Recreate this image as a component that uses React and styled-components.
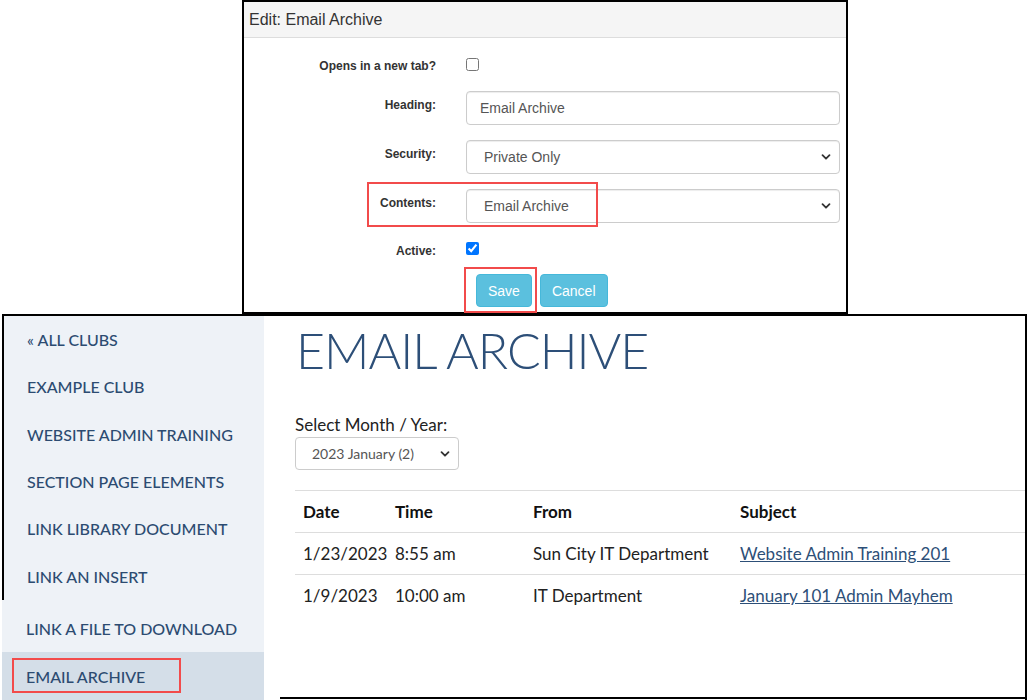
import React from "react";
import styled, { createGlobalStyle } from "styled-components";

const GlobalStyle = createGlobalStyle`
  html, body {
    margin: 0;
    padding: 0;
    background: #fff;
  }
  * {
    box-sizing: border-box;
  }
`;

const sideLinksTop = [
    "« ALL CLUBS",
    "EXAMPLE CLUB",
    "WEBSITE ADMIN TRAINING",
    "SECTION PAGE ELEMENTS",
    "LINK LIBRARY DOCUMENT",
    "LINK AN INSERT",
];

const emails = [
    { date: "1/23/2023", time: "8:55 am", from: "Sun City IT Department", subject: "Website Admin Training 201" },
    { date: "1/9/2023", time: "10:00 am", from: "IT Department", subject: "January 101 Admin Mayhem" },
];

const Chevron = ({ size = 10 }) => (
    <svg width={size} height={size} viewBox="0 0 10 10">
        <path d="M1.5 3.2 L5 6.7 L8.5 3.2" fill="none" stroke="#333" strokeWidth="1.8" strokeLinecap="round" strokeLinejoin="round" />
    </svg>
);

const App = () => {
    return (
        <>
            <GlobalStyle />
            <Page>
                <TopRow>
                    <EditPanel>
                        <PanelHeading>Edit: Email Archive</PanelHeading>
                        <PanelBody>
                            <FormRow $height={25}>
                                <Label $pad={7}>Opens in a new tab?</Label>
                                <Check type="checkbox" $top={7} readOnly />
                            </FormRow>
                            <FormRow>
                                <Label>Heading:</Label>
                                <TextInput type="text" defaultValue="Email Archive" />
                            </FormRow>
                            <FormRow>
                                <Label>Security:</Label>
                                <SelectBox>
                                    <span>Private Only</span>
                                    <Chevron />
                                </SelectBox>
                            </FormRow>
                            <FormRow>
                                <Label>Contents:</Label>
                                <SelectBox>
                                    <span>Email Archive</span>
                                    <Chevron />
                                </SelectBox>
                                <Callout $left={123} $top={-7} $width={231} $height={45} />
                            </FormRow>
                            <FormRow $height={21}>
                                <Label $pad={5}>Active:</Label>
                                <Check type="checkbox" $top={4} checked readOnly />
                            </FormRow>
                            <ButtonRow>
                                <SaveWrap>
                                    <InfoButton>Save</InfoButton>
                                    <Callout $left={-12} $top={-7} $width={73} $height={46} />
                                </SaveWrap>
                                <InfoButton>Cancel</InfoButton>
                            </ButtonRow>
                        </PanelBody>
                    </EditPanel>
                </TopRow>

                <SiteFrame>
                    <Sidebar>
                        <SidebarUpper>
                            {sideLinksTop.map((l) => (
                                <SideLink key={l}>{l}</SideLink>
                            ))}
                        </SidebarUpper>
                        <SidebarLower>
                            <SideLink $pad={24}>LINK A FILE TO DOWNLOAD</SideLink>
                            <SideLink $pad={24} $active>
                                EMAIL ARCHIVE
                                <Callout $left={10} $top={6} $width={169} $height={35} />
                            </SideLink>
                        </SidebarLower>
                    </Sidebar>

                    <Main>
                        <PageTitle>EMAIL ARCHIVE</PageTitle>
                        <MonthLabel>Select Month / Year:</MonthLabel>
                        <MonthSelect>
                            <span>2023 January (2)</span>
                            <Chevron />
                        </MonthSelect>
                        <ArchiveTable>
                            <colgroup>
                                <col style={{ width: 92 }} />
                                <col style={{ width: 138 }} />
                                <col style={{ width: 207 }} />
                                <col />
                            </colgroup>
                            <thead>
                                <tr>
                                    <Th>Date</Th>
                                    <Th>Time</Th>
                                    <Th>From</Th>
                                    <Th>Subject</Th>
                                </tr>
                            </thead>
                            <tbody>
                                {emails.map((e) => (
                                    <tr key={e.date}>
                                        <Td>{e.date}</Td>
                                        <Td>{e.time}</Td>
                                        <Td>{e.from}</Td>
                                        <Td>
                                            <SubjectLink href="#">{e.subject}</SubjectLink>
                                        </Td>
                                    </tr>
                                ))}
                            </tbody>
                        </ArchiveTable>
                    </Main>
                </SiteFrame>
            </Page>
        </>
    );
};

export default App;

const Page = styled.div`
    width: 1028px;
    height: 700px;
    overflow: hidden;
    background: #fff;
`;

const TopRow = styled.div`
    display: flex;
    padding-left: 242px;
    position: relative;
    z-index: 2;
`;

const EditPanel = styled.div`
    width: 606px;
    height: 314px;
    border: 2px solid #000;
    background: #fff;
    font-family: "Liberation Sans", Arial, sans-serif;
    color: #333;
`;

const PanelHeading = styled.div`
    height: 36px;
    padding: 0 5px;
    display: flex;
    align-items: center;
    background: #f5f5f5;
    border-bottom: 1px solid #ddd;
    font-size: 16px;
    color: #333;
`;

const PanelBody = styled.div`
    padding-top: 13px;
    display: flex;
    flex-direction: column;
    gap: 15px;
`;

const FormRow = styled.div`
    position: relative;
    display: flex;
    align-items: flex-start;
    height: ${(p) => p.$height || 34}px;
`;

const Label = styled.label`
    width: 192px;
    flex: 0 0 192px;
    padding-top: ${(p) => (p.$pad != null ? p.$pad : 6)}px;
    text-align: right;
    font-size: 12px;
    font-weight: bold;
    color: #333;
    line-height: 17px;
    margin-right: 30px;
`;

const Check = styled.input`
    margin: ${(p) => p.$top}px 0 0 0;
    width: 13px;
    height: 13px;
    accent-color: #0075ff;
`;

const TextInput = styled.input`
    width: 374px;
    height: 34px;
    padding: 6px 13px;
    border: 1px solid #ccc;
    border-radius: 4px;
    font-family: "Liberation Sans", Arial, sans-serif;
    font-size: 14px;
    color: #555;
    box-shadow: inset 0 1px 1px rgba(0, 0, 0, 0.075);
    outline: none;
`;

const SelectBox = styled.div`
    width: 374px;
    height: 34px;
    padding: 0 8px 0 17px;
    display: flex;
    align-items: center;
    justify-content: space-between;
    border: 1px solid #ccc;
    border-radius: 4px;
    font-size: 14px;
    color: #555;
    box-shadow: inset 0 1px 1px rgba(0, 0, 0, 0.075);
`;

const Callout = styled.div`
    position: absolute;
    left: ${(p) => p.$left}px;
    top: ${(p) => p.$top}px;
    width: ${(p) => p.$width}px;
    height: ${(p) => p.$height}px;
    border: 2px solid #f24b4b;
    pointer-events: none;
`;

const ButtonRow = styled.div`
    display: flex;
    gap: 8px;
    padding-left: 232px;
`;

const SaveWrap = styled.div`
    position: relative;
`;

const InfoButton = styled.button`
    height: 33px;
    padding: 0 11px;
    background: #5bc0de;
    border: 1px solid #46b8da;
    border-radius: 4px;
    color: #fff;
    font-family: "Liberation Sans", Arial, sans-serif;
    font-size: 14px;
`;

const SiteFrame = styled.div`
    display: flex;
    width: 1025px;
    height: 386px;
    margin-left: 2px;
    border-top: 2px solid #000;
    border-right: 2px solid #000;
    font-family: Lato, "Open Sans", sans-serif;
`;

const Sidebar = styled.div`
    width: 262px;
    flex: 0 0 262px;
    display: flex;
    flex-direction: column;
`;

const SidebarUpper = styled.div`
    height: 284px;
    border-left: 2px solid #000;
    background: #eef2f7;
    display: flex;
    flex-direction: column;
`;

const SidebarLower = styled.div`
    flex: 1;
    padding-top: 5px;
    background: #eef2f7;
    display: flex;
    flex-direction: column;
`;

const SideLink = styled.div`
    position: relative;
    height: 47.3px;
    flex: 0 0 auto;
    display: flex;
    align-items: center;
    padding-left: ${(p) => p.$pad || 23}px;
    font-size: 16px;
    font-weight: 500;
    color: #2c4b71;
    background: ${(p) => (p.$active ? "#d4dee8" : "transparent")};
    ${(p) => p.$active && "flex: 1;"}
`;

const Main = styled.div`
    flex: 1;
    margin-left: 16px;
    padding-left: 15px;
    border-bottom: 2px solid #000;
    height: 383px;
    display: flex;
    flex-direction: column;
    align-items: flex-start;
`;

const PageTitle = styled.h1`
    margin: 4px 0 0 1px;
    font-family: Lato, sans-serif;
    font-weight: 300;
    font-size: 50px;
    line-height: 60px;
    letter-spacing: -1px;
    color: #2d4f78;
`;

const MonthLabel = styled.div`
    margin-top: 34px;
    font-size: 17px;
    color: #222;
    line-height: 22px;
`;

const MonthSelect = styled.div`
    width: 164px;
    height: 33px;
    margin-top: 1px;
    padding: 0 8px 0 16px;
    display: flex;
    align-items: center;
    justify-content: space-between;
    border: 1px solid #ccc;
    border-radius: 4px;
    font-size: 14px;
    color: #555;
`;

const ArchiveTable = styled.table`
    margin-top: 20px;
    width: 730px;
    border-collapse: collapse;
    table-layout: fixed;
    font-size: 17px;
    color: #222;
    border-top: 1px solid #ddd;
`;

const Th = styled.th`
    text-align: left;
    font-weight: bold;
    color: #111;
    height: 42px;
    padding: 0 8px;
    border-bottom: 1px solid #ddd;
`;

const Td = styled.td`
    height: 42px;
    padding: 0 8px;
    white-space: nowrap;
    tr:first-child > & {
        border-bottom: 1px solid #ddd;
    }
`;

const SubjectLink = styled.a`
    color: #2d4f78;
    text-decoration: underline;
`;
